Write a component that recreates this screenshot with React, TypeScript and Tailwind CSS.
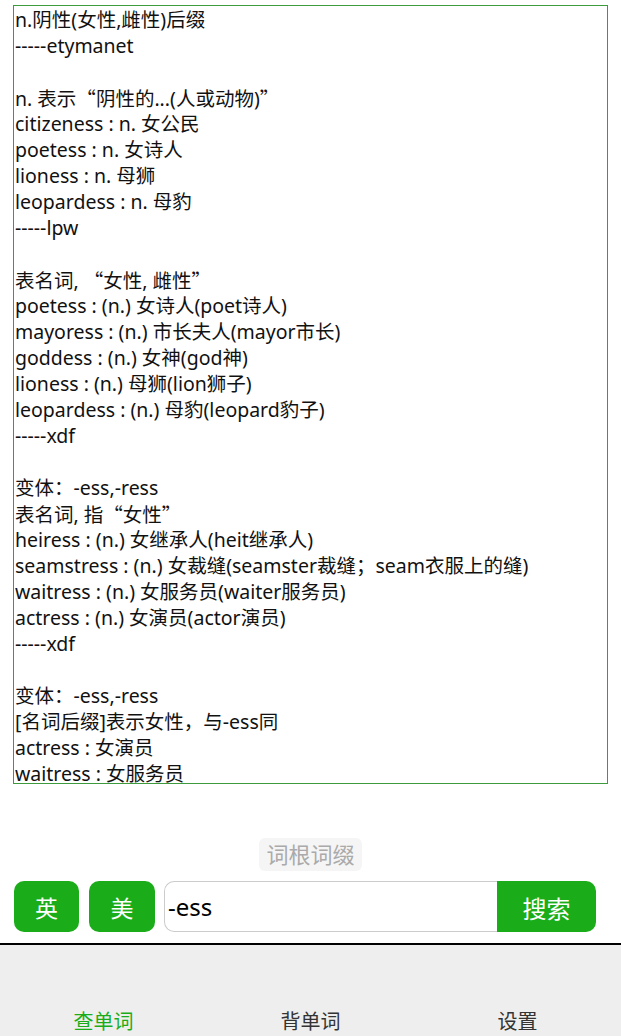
import React from "react";

const lines = [
  "n.阴性(女性,雌性)后缀",
  "-----etymanet",
  "",
  "n. 表示“阴性的...(人或动物)”",
  "citizeness : n. 女公民",
  "poetess : n. 女诗人",
  "lioness : n. 母狮",
  "leopardess : n. 母豹",
  "-----lpw",
  "",
  "表名词, “女性, 雌性”",
  "poetess : (n.) 女诗人(poet诗人)",
  "mayoress : (n.) 市长夫人(mayor市长)",
  "goddess : (n.) 女神(god神)",
  "lioness : (n.) 母狮(lion狮子)",
  "leopardess : (n.) 母豹(leopard豹子)",
  "-----xdf",
  "",
  "变体：-ess,-ress",
  "表名词, 指“女性”",
  "heiress : (n.) 女继承人(heit继承人)",
  "seamstress : (n.) 女裁缝(seamster裁缝；seam衣服上的缝)",
  "waitress : (n.) 女服务员(waiter服务员)",
  "actress : (n.) 女演员(actor演员)",
  "-----xdf",
  "",
  "变体：-ess,-ress",
  "[名词后缀]表示女性，与-ess同",
  "actress : 女演员",
  "waitress : 女服务员",
];

const font = { fontFamily: '"Noto Sans", "Noto Sans CJK SC", sans-serif' };

// render curly quotes with the CJK face so they come out full width
function Line({ text }: { text: string }) {
  const parts = text.split(/([“”])/);
  return (
    <>
      {parts.map((p, i) =>
        p === "“" || p === "”" ? (
          <span key={i} style={{ fontFamily: '"Noto Sans CJK SC", sans-serif' }}>
            {p}
          </span>
        ) : (
          <React.Fragment key={i}>{p}</React.Fragment>
        )
      )}
    </>
  );
}

export default function App() {
  return (
    <div className="w-[621px] h-[1036px] bg-white flex flex-col overflow-hidden" style={font}>
      {/* result box */}
      <div className="mt-[5px] ml-[13px] w-[595px] h-[779px] border border-[#3d9b3d] overflow-hidden px-px pt-px">
        {lines.map((l, i) => (
          <div key={i} className="h-[26px] leading-[26px] text-[19.5px] text-[#111] whitespace-pre">
            <Line text={l} />
          </div>
        ))}
      </div>

      <div className="flex justify-center mt-[54px]">
        <span className="px-[7px] h-[33px] leading-[33px] rounded-md bg-[#f5f5f5] text-[#aaaaaa] text-[22px]">
          词根词缀
        </span>
      </div>

      {/* search row */}
      <div className="flex items-stretch mt-[10px] ml-[14px] h-[51px]">
        <button className="w-[65px] rounded-[10px] bg-[#1aad19] text-white text-[23px] pt-[3px]">英</button>
        <button className="w-[66px] ml-[10px] rounded-[10px] bg-[#1aad19] text-white text-[23px] pt-[3px]">美</button>
        <div className="w-[333px] ml-[9px] border border-[#cccccc] border-r-0 rounded-l-[10px] flex items-center pl-[3px] text-[24px] text-black">
          -ess
        </div>
        <button className="w-[99px] rounded-r-[10px] bg-[#1aad19] text-white text-[24px] pt-[4px]">搜索</button>
      </div>

      <div className="mt-[11px] h-[2px] bg-black" />

      {/* bottom tabs */}
      <div className="flex-1 bg-[#eeeeee] grid grid-cols-3 items-end pb-[1px]">
        <div className="text-center text-[20px] text-[#1aad19] leading-[26px]">查单词</div>
        <div className="text-center text-[20px] text-[#333333] leading-[26px]">背单词</div>
        <div className="text-center text-[20px] text-[#333333] leading-[26px]">设置</div>
      </div>
    </div>
  );
}
